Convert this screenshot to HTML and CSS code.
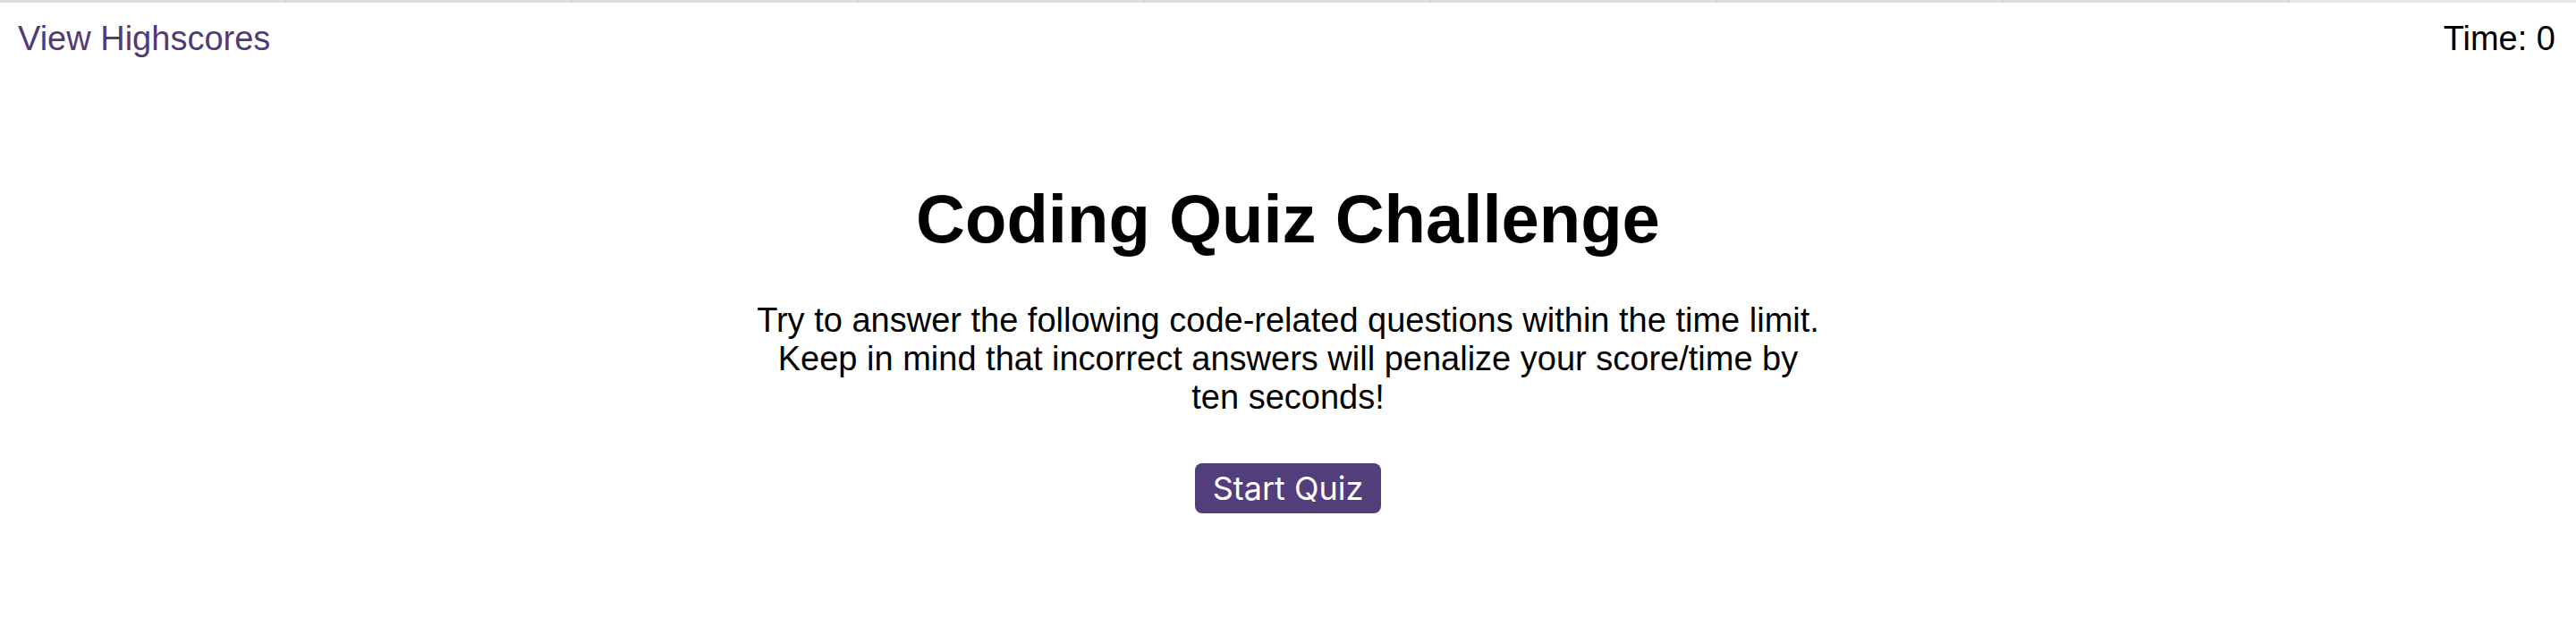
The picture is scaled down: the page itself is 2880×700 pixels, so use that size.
FILE: index.html
```html
<!DOCTYPE html>
<html lang="en">
<head>
<meta charset="utf-8">
<title>Coding Quiz Challenge</title>
<link rel="stylesheet" href="styles.css">
</head>
<body>
<div class="tabbar">
  <span class="tab"></span><span class="tab"></span><span class="tab"></span><span class="tab"></span><span class="tab"></span><span class="tab"></span><span class="tab"></span><span class="tab"></span><span class="tab last"></span>
</div>
<header class="topbar">
  <a class="highscores" href="#">View Highscores</a>
  <div class="timer">Time: <span class="time-value">0</span></div>
</header>
<main class="intro">
  <h1 class="title">Coding Quiz Challenge</h1>
  <p class="lead">Try to answer the following code-related questions within the time limit. Keep in mind that incorrect answers will penalize your score/time by ten seconds!</p>
  <button class="start-btn" type="button">Start Quiz</button>
</main>
</body>
</html>
```
FILE: styles.css
```css
html, body {
  margin: 0;
  padding: 0;
  background: #ffffff;
}
body {
  font-family: "Liberation Sans", Arial, sans-serif;
  color: #000000;
}
.tabbar {
  display: flex;
  height: 3px;
  background: #e4e4e6;
}
.tab {
  flex: 0 0 320px;
  box-sizing: border-box;
  border-right: 1px solid #cfcfd2;
  background: #dedee1;
}
.tab.last {
  flex: 1 1 auto;
  border-right: none;
  background: #e8e8ea;
}
.topbar {
  display: flex;
  justify-content: space-between;
  align-items: flex-start;
  padding: 19px 23px 0 20px;
  font-size: 38px;
  line-height: normal;
}
.highscores {
  color: #4f3b78;
  text-decoration: none;
}
.timer {
  color: #000000;
}
.intro {
  display: flex;
  flex-direction: column;
  align-items: center;
  padding-top: 136px;
  text-align: center;
}
.title {
  margin: 0;
  font-size: 76px;
  font-weight: bold;
  line-height: normal;
}
.lead {
  margin: 49px 0 0;
  max-width: 1195px;
  font-size: 38px;
  line-height: normal;
}
.start-btn {
  margin-top: 52px;
  padding: 6px 20px;
  border: none;
  border-radius: 8px;
  background: #523e7b;
  color: #ffffff;
  font-family: Inter, "Noto Sans", sans-serif;
  font-size: 36px;
  line-height: normal;
  cursor: pointer;
}
```
